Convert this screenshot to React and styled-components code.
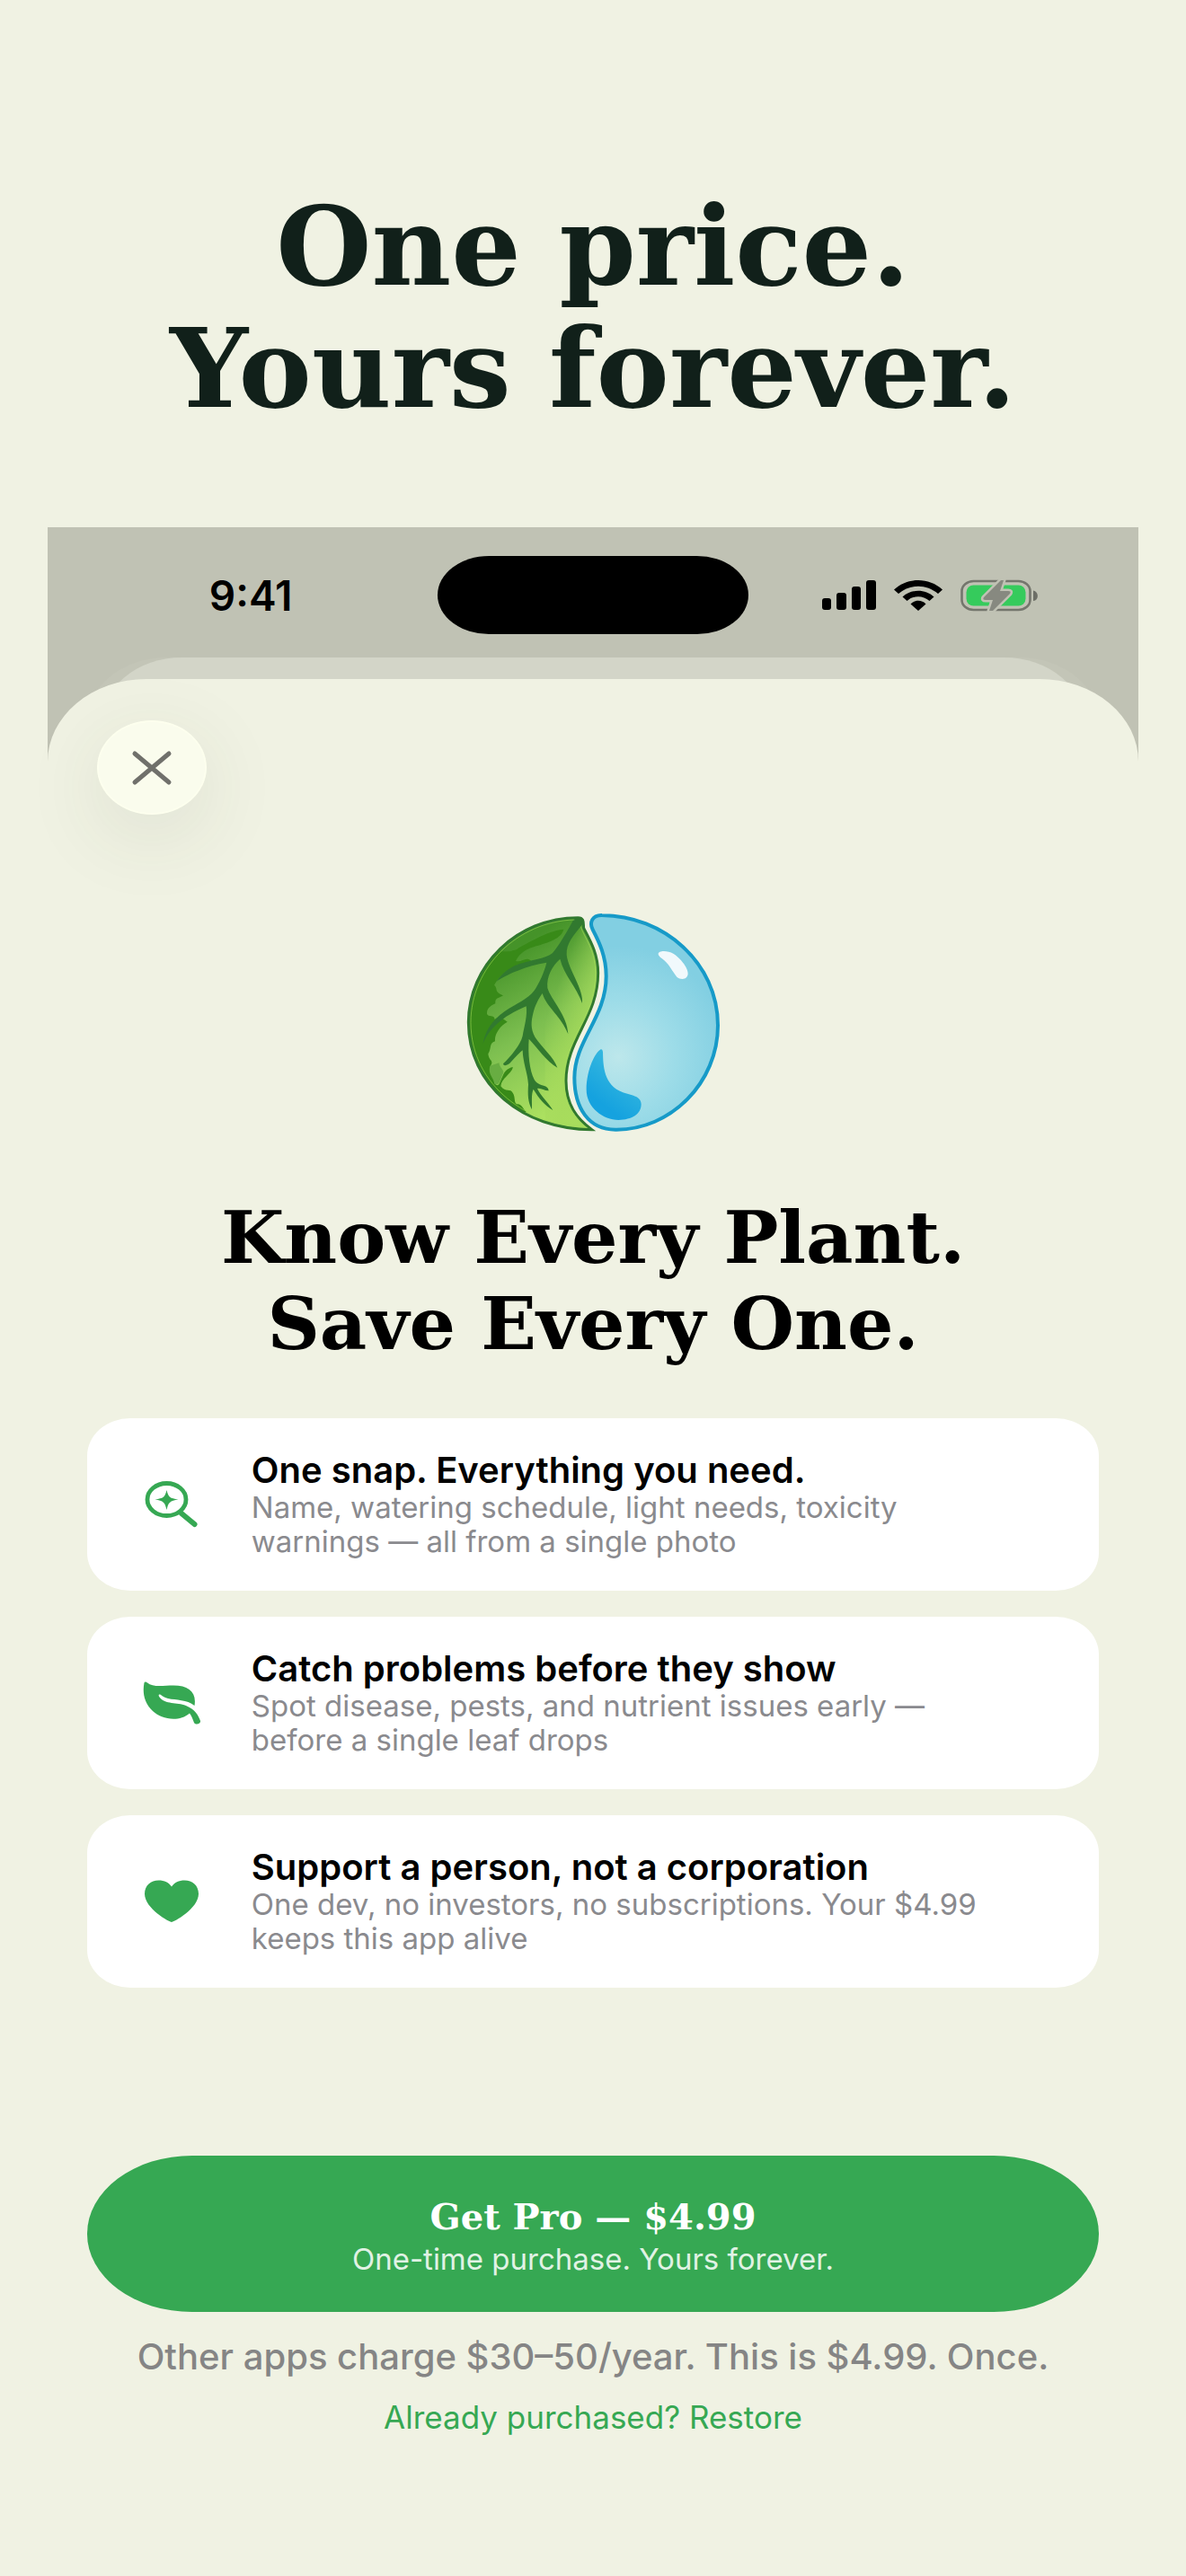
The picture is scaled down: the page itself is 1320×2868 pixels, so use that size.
import React from 'react';
import styled, {createGlobalStyle} from 'styled-components';

const green = '#36a853';
const cream = '#f0f2e3';
const serif = '"DejaVu Serif", serif';
const sans = 'Inter, "Liberation Sans", sans-serif';

const features = [
  {
    icon: 'snap',
    title: 'One snap. Everything you need.',
    lines: ['Name, watering schedule, light needs, toxicity', 'warnings — all from a single photo']
  },
  {
    icon: 'leaf',
    title: 'Catch problems before they show',
    lines: ['Spot disease, pests, and nutrient issues early —', 'before a single leaf drops']
  },
  {
    icon: 'heart',
    title: 'Support a person, not a corporation',
    lines: ['One dev, no investors, no subscriptions. Your $4.99', 'keeps this app alive']
  }
];

export default function App() {
  return <React.Fragment>
    <GlobalStyle />
    <Page>
      <Headline>One price.<br />Yours forever.</Headline>
      <Screen>
        <StatusBar>
          <Clock>9:41</Clock>
          <Island />
          <StatusIcons>
            <Signal />
            <Wifi />
            <Battery />
          </StatusIcons>
        </StatusBar>
        <BackSheet />
        <Sheet>
          <SheetBar>
            <CloseButton aria-label="Close">
              <svg width="48" height="42" viewBox="0 0 48 42" fill="none" stroke="#70706b" strokeWidth="5" strokeLinecap="round">
                <path d="M5 5 43 37M43 5 5 37" />
              </svg>
            </CloseButton>
          </SheetBar>
          <Logo />
          <Title>Know Every Plant.<br />Save Every One.</Title>
          <Features>
            {features.map(feature => <Card key={feature.icon}>
              <IconSlot><FeatureIcon name={feature.icon} /></IconSlot>
              <div>
                <CardTitle>{feature.title}</CardTitle>
                <CardText>{feature.lines[0]}<br />{feature.lines[1]}</CardText>
              </div>
            </Card>)}
          </Features>
          <BuyButton>
            <Price>Get Pro — $4.99</Price>
            <PriceNote>One-time purchase. Yours forever.</PriceNote>
          </BuyButton>
          <Compare>Other apps charge $30–50/year. This is $4.99. Once.</Compare>
          <Restore href="#restore">Already purchased? Restore</Restore>
        </Sheet>
      </Screen>
    </Page>
  </React.Fragment>
}

const Signal = () => <svg width="60" height="34" viewBox="0 0 60 34">
  <rect x="0" y="20" width="10" height="13" rx="3" />
  <rect x="16" y="14" width="11" height="19" rx="3" />
  <rect x="33" y="7" width="10" height="26" rx="3" />
  <rect x="49" y="0" width="11" height="33" rx="3" />
</svg>

const Wifi = () => <svg width="54" height="34" viewBox="0 0 54 34">
  <path d="M0 10.500C15-3.500 39-3.500 54 10.500L49 15C36 4 18 4 5 15Z" />
  <path d="M9.500 18.500C19 9.500 35 9.500 44.500 18.500L39.500 23C32 16.500 22 16.500 14.500 23Z" />
  <path d="M18.500 26.500C23 21.500 31 21.500 35.500 26.500L27 34Z" />
</svg>

const Battery = () => <svg width="88" height="36" viewBox="0 0 88 36">
  <rect x="1.500" y="2" width="76" height="32" rx="13" ry="11" fill="none" stroke="#74766d" strokeWidth="2.600" />
  <path d="M81 12.500C87.500 13.500 87.500 23.500 81 24Z" fill="#6c6e66" />
  <rect x="6.500" y="6.500" width="66" height="23" rx="8" fill="#35cb5c" />
  <path d="M45 1 26 20Q24 23 28 23H36L32 35H36L55 16Q57 13 53 13H44L48 1Z" fill="#878980" stroke="#c0c2b4" strokeWidth="5" strokeLinejoin="round" paintOrder="stroke" />
</svg>

const FeatureIcon = ({name}) => {
  if (name === 'snap') {
    return <svg width="60" height="52" viewBox="0 0 60 52">
      <g fill="none" stroke={green} strokeLinecap="round">
        <ellipse cx="24.500" cy="20.500" rx="21.500" ry="18" strokeWidth="4.800" />
        <path d="M41 36 55.500 48" strokeWidth="6" />
      </g>
      <path d="M24.500 10C26.500 18 28 19 37.500 20.500C28 22 26.500 23.500 24.500 32C22.500 23.500 21 22 11.500 20.500C21 19 22.500 18 24.500 10Z" fill={green} />
    </svg>
  }
  if (name === 'leaf') {
    return <svg width="64" height="48" viewBox="0 0 64 48">
      <path d="M1.500 1.500C2 .3 3.500 .3 5 1.500C11 7 23 4.500 34 4.500C51 4.500 60 12 57.500 27C49 20 37 21 28 19C21 17 21 15 19 14.500C17 14.500 17.500 16 18.500 17.500C25 26 38 23 48 27C58 31 62 38 64 44C64.500 47.500 59 49 57 46C55 41 54 38 52 35.500C40 46 20 42 11 33C1 24-.500 12 1.500 1.500Z" fill={green} />
    </svg>
  }
  return <svg width="60" height="48" viewBox="0 0 60 48">
    <path d="M30 47C28 47 0 32 0 15.500C0 6 7 .5 15.500 .5C22 .5 27 3 30 7.500C33 3 38 .5 44.500 .5C53 .5 60 6 60 15.500C60 32 32 47 30 47Z" fill={green} />
  </svg>
}

const Logo = () => <LogoArt viewBox="48 42 864 744" role="img" aria-label="Leaf and water drop">
  <defs>
    <linearGradient id="leafFill" x1="130" y1="220" x2="430" y2="720" gradientUnits="userSpaceOnUse">
      <stop offset="0" stopColor="#459329" />
      <stop offset=".45" stopColor="#7dbf50" />
      <stop offset="1" stopColor="#b5e763" />
    </linearGradient>
    <linearGradient id="leafSide" x1="330" y1="380" x2="470" y2="430" gradientUnits="userSpaceOnUse">
      <stop offset="0" stopColor="#a6db5c" stopOpacity="0" />
      <stop offset="1" stopColor="#a6db5c" stopOpacity=".9" />
    </linearGradient>
    <radialGradient id="dropFill" cx="565" cy="530" r="370" gradientUnits="userSpaceOnUse">
      <stop offset="0" stopColor="#bde7eb" />
      <stop offset=".5" stopColor="#9ddce8" />
      <stop offset="1" stopColor="#82cfe2" />
    </radialGradient>
    <linearGradient id="dropCore" x1="590" y1="560" x2="500" y2="680" gradientUnits="userSpaceOnUse">
      <stop offset="0" stopColor="#36b8df" />
      <stop offset="1" stopColor="#15a2df" />
    </linearGradient>
    <clipPath id="leafClip">
      <path d="M430 65C225 65 64 225 64 415C64 625 245 772 476 773C425 735 390 690 390 610C390 470 497 400 497 250C497 185 470 140 449 100C447 84 452 65 430 65Z" />
    </clipPath>
  </defs>

  <g clipPath="url(#leafClip)">
    <rect x="50" y="50" width="460" height="740" fill="url(#leafFill)" />
    <rect x="320" y="50" width="190" height="740" fill="url(#leafSide)" />
    <path d="M50 180 204 178C216 172 222 176 232 166C270 145 340 105 382 104C375 135 330 148 290 160C260 170 236 180 222 210C240 215 250 200 265 204C290 215 260 225 230 222C200 235 170 255 150 290C164 302 148 312 180 325C165 335 152 332 154 352C135 360 125 370 126 386C130 400 150 385 152 405C170 390 180 405 194 413C170 425 150 455 153 478C132 485 142 502 130 520C132 545 150 540 138 560C132 585 150 590 150 615C165 640 170 610 180 590C190 570 205 565 213 565C205 590 175 600 172 628C188 650 205 635 212 650C222 665 215 680 225 688C242 685 246 705 258 714L200 720 50 560Z" fill="#388a18" />
    <path d="M136 560C128 590 150 600 151 620C170 630 171 600 180 585C185 575 170 570 166 550Z" fill="#68ad42" />
    <g fill="#31792f">
      <path d="M418 66C395 110 365 160 345 183C320 205 250 208 210 230C185 243 170 260 158 278C190 255 260 225 325 215C318 245 300 285 284 308C262 338 225 350 185 378C140 410 120 445 112 488C130 440 175 395 257 361C262 390 250 430 245 460C238 490 205 530 180 553C182 564 198 557 207 546C222 530 235 515 245 508C246 550 262 585 264 622C262 655 262 680 276 706C277 680 273 655 281 638C300 670 320 693 346 708C332 684 305 660 294 636C305 632 318 644 332 643C330 620 300 632 284 606C268 575 262 520 266 470C295 500 325 545 361 566C350 532 310 500 287 465C270 435 274 410 280 385C286 360 298 335 311 318C325 365 375 395 397 454C394 390 340 340 328 300C324 260 345 225 370 203C384 260 425 295 444 351C450 305 398 240 392 190C390 150 415 125 444 88L446 66Z" />
    </g>
  </g>
  <path d="M430 65C225 65 64 225 64 415C64 625 245 772 476 773C425 735 390 690 390 610C390 470 497 400 497 250C497 185 470 140 449 100C447 84 452 65 430 65Z" fill="none" stroke="#31792f" strokeWidth="9" />
  <path d="M439 95C450 130 489 175 489 250C489 395 382 470 382 610C382 680 415 725 450 764C270 760 72 630 72 415C72 230 230 77 418 72" fill="none" stroke="#a4dc5c" strokeWidth="3" opacity=".55" />

  <path d="M510 57C715 58 897 215 897 425C897 615 740 775 555 773C465 773 418 700 418 600C418 475 524 400 524 260C524 195 500 145 479 105C467 82 477 56 510 57Z" fill="url(#dropFill)" stroke="#169ac8" strokeWidth="12" />
  <path d="M506 505C490 512 458 570 458 640C458 700 515 741 565 741C610 740 641 722 641 688C641 660 605 658 580 649C515 625 514 560 513 514C512 507 510 504 506 505Z" fill="url(#dropCore)" />
  <path d="M698 187C697 174 730 175 748 185C775 202 797 233 797 253C796 272 773 274 760 263C745 245 735 222 718 208C708 199 699 195 698 187Z" fill="#f1f9fc" />
</LogoArt>

const GlobalStyle = createGlobalStyle`
  body {
    margin: 0;
    background: ${cream};
    font-family: ${sans};
  }
  * {
    box-sizing: border-box;
  }
`;

const Page = styled.main`
  padding: 206px 4% 0;
`;

const Headline = styled.h1`
  margin: 0 0 109px;
  font-family: ${serif};
  font-size: 122px;
  font-weight: 700;
  line-height: 136px;
  text-align: center;
  color: #11201a;
`;

const Screen = styled.section`
  background: #c0c2b4;
`;

const StatusBar = styled.div`
  display: grid;
  grid-template-columns: 1fr 346px 1fr;
  align-items: center;
  padding: 32px 0 26px;
`;

const Clock = styled.span`
  padding-left: 180px;
  font-size: 46px;
  font-weight: 600;
  line-height: 48px;
  color: #000;
`;

const Island = styled.div`
  height: 87px;
  border-radius: 58px / 44px;
  background: #000;
`;

const StatusIcons = styled.div`
  display: flex;
  align-items: center;
  gap: 20px;
  padding-left: 82px;
`;

const BackSheet = styled.div`
  height: 100px;
  margin: 0 59px -76px;
  border-radius: 90px 90px 0 0 / 76px 76px 0 0;
  background: #d3d5c8;
  box-shadow: -17px 0 0 #c3c5b7, 17px 0 0 #c3c5b7;
`;

const Sheet = styled.div`
  position: relative;
  display: flex;
  flex-direction: column;
  padding: 46px 44px 152px;
  border-radius: 110px 110px 0 0 / 92px 92px 0 0;
  background: ${cream};
`;

const SheetBar = styled.div`
  display: flex;
  padding: 0 11px;
`;

const CloseButton = styled.button`
  display: flex;
  align-items: center;
  justify-content: center;
  width: 122px;
  height: 105px;
  padding: 0;
  border: 2px solid #fdffee;
  border-radius: 50%;
  background: #fafced;
  box-shadow: 0 22px 90px rgba(60, 70, 50, 0.1);
`;

const LogoArt = styled.svg`
  width: 288px;
  height: 248px;
  margin: 107px auto 68px;
`;

const Title = styled.h2`
  margin: 0 0 57px;
  font-family: ${serif};
  font-size: 81px;
  font-weight: 700;
  line-height: 96px;
  text-align: center;
  color: #000;
`;

const Features = styled.div`
  display: flex;
  flex-direction: column;
  gap: 29px;
  margin-bottom: 187px;
`;

const Card = styled.article`
  display: flex;
  align-items: center;
  padding: 36px 44px;
  border-radius: 48px / 42px;
  background: #fff;
`;

const IconSlot = styled.div`
  display: flex;
  flex: none;
  justify-content: center;
  width: 100px;
  margin-right: 39px;
`;

const CardTitle = styled.h3`
  margin: 0;
  font-size: 40px;
  font-weight: 600;
  line-height: 44px;
  color: #000;
`;

const CardText = styled.p`
  margin: 0;
  font-size: 33px;
  line-height: 38px;
  color: #8a8a8e;
`;

const BuyButton = styled.button`
  display: flex;
  flex-direction: column;
  align-items: center;
  justify-content: center;
  padding: 40px;
  border: 0;
  border-radius: 118px / 88px;
  background: ${green};
  color: #fff;
`;

const Price = styled.span`
  font-family: ${serif};
  font-size: 40px;
  font-weight: 700;
  line-height: 56px;
`;

const PriceNote = styled.span`
  font-family: ${sans};
  font-size: 33px;
  line-height: 38px;
  color: #e0f2e4;
`;

const Compare = styled.p`
  margin: 28px 0 26px;
  font-size: 40px;
  font-weight: 500;
  line-height: 44px;
  text-align: center;
  color: #858585;
`;

const Restore = styled.a`
  align-self: center;
  font-size: 35px;
  line-height: 38px;
  color: ${green};
  text-decoration: none;
`;
